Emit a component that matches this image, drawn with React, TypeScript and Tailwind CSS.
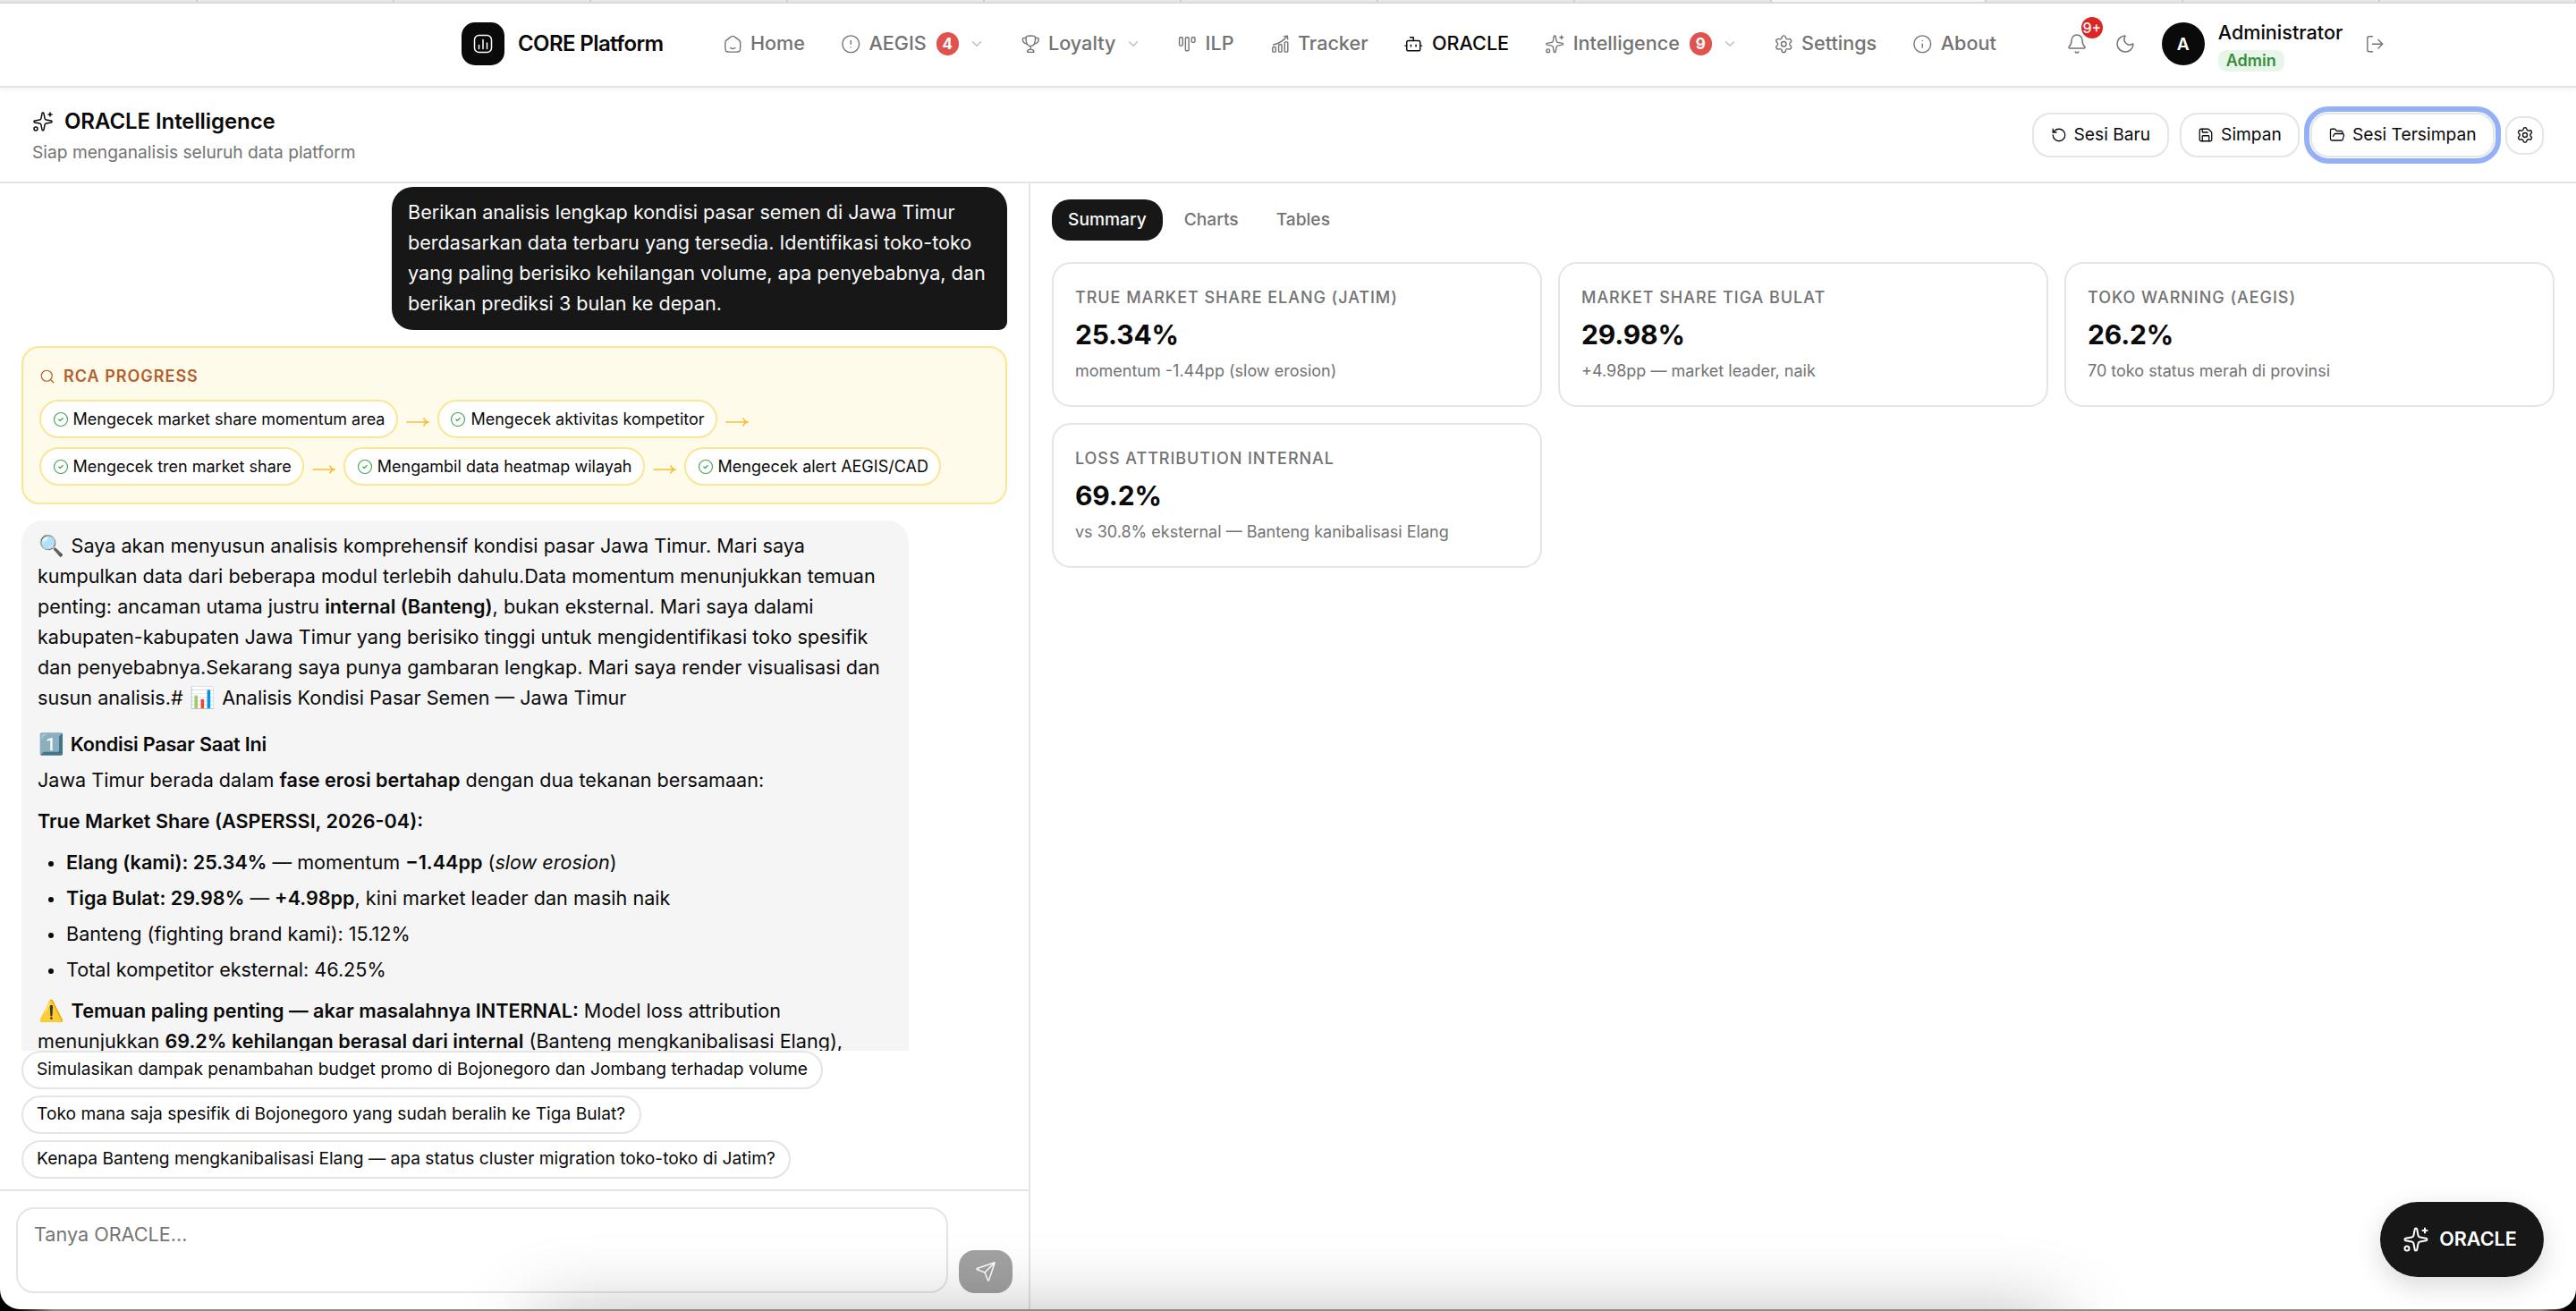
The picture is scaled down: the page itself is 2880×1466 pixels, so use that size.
import React from 'react';
import {
  Bell,
  Bot,
  ChevronDown,
  CircleAlert,
  CircleCheck,
  FolderOpen,
  Info,
  LogOut,
  Moon,
  RotateCcw,
  Save,
  Search,
  Send,
  Settings,
  Sparkles,
} from 'lucide-react';

const HomeIcon = () => (
  <svg width="22.5" height="22.5" viewBox="0 0 24 24" fill="none" stroke="currentColor" strokeWidth="1.5" strokeLinecap="round" strokeLinejoin="round">
    <path d="M3 12v2.5c0 3.3 0 4.95 1.03 5.97C5.05 21.5 6.7 21.5 10 21.5h4c3.3 0 4.95 0 5.97-1.03C21 19.45 21 17.8 21 14.5V12c0-1.7 0-2.53-.36-3.26-.35-.73-1.02-1.24-2.34-2.28l-2-1.55C14.23 3.3 13.2 2.5 12 2.5s-2.23.8-4.3 2.41l-2 1.55C4.37 7.5 3.7 8.01 3.36 8.74 3 9.47 3 10.3 3 12z" />
    <path d="M15 16.6c-.8.62-1.85 1-3 1s-2.2-.38-3-1" />
  </svg>
);

const TrophyIcon = () => (
  <svg width="22.5" height="22.5" viewBox="0 0 24 24" fill="none" stroke="currentColor" strokeWidth="1.5" strokeLinecap="round" strokeLinejoin="round">
    <path d="M6.3 4.3C6.3 2.9 7.6 2.2 12 2.2s5.7.7 5.7 2.1c0 5.3-1.7 10.2-5.7 10.2S6.3 9.6 6.3 4.3z" />
    <path d="M6.4 4.8H4.2c-1.3 0-2 .8-1.8 2 .5 2.5 1.9 4.4 4.4 5M17.6 4.8h2.2c1.3 0 2 .8 1.8 2-.5 2.5-1.9 4.4-4.4 5" />
    <path d="M12 14.6v3.6M8.9 21.7c-.7 0-1-.4-.8-1 .5-1.5 2-2.4 3.9-2.4s3.400.9 3.9 2.4c.2.6-.1 1-.8 1z" />
  </svg>
);

const KanbanIcon = () => (
  <svg width="22.5" height="22.5" viewBox="0 0 24 24" fill="none" stroke="currentColor" strokeWidth="1.5">
    <rect x="2.7" y="4" width="4" height="10" rx="1.2" />
    <rect x="10" y="4" width="4" height="16" rx="1.2" />
    <rect x="17.3" y="4" width="4" height="6" rx="1.2" />
  </svg>
);

const TrackerIcon = () => (
  <svg width="22.5" height="22.5" viewBox="0 0 24 24" fill="none" stroke="currentColor" strokeWidth="1.5" strokeLinecap="round" strokeLinejoin="round">
    <rect x="3" y="15.5" width="3.7" height="6" rx="1" />
    <rect x="10.2" y="12.5" width="3.7" height="9" rx="1" />
    <rect x="17.4" y="9.5" width="3.7" height="12" rx="1" />
    <path d="M4 12.8c6-1.2 11.5-4.4 16-9.8M16.5 2.8l4-.5.6 4" />
  </svg>
);

const LogoIcon = () => (
  <svg width="24" height="24" viewBox="0 0 24 24" fill="none" stroke="currentColor" strokeWidth="1.5" strokeLinecap="round">
    <rect x="2.5" y="2.5" width="19" height="19" rx="5" />
    <path d="M7.5 13.5v4M12 7.5v10M16.5 11v6.5" />
  </svg>
);

const StepArrow = () => (
  <svg width="26" height="12" viewBox="0 0 26 12" fill="none" stroke="#f9bd35" strokeWidth="1.6" className="mt-1.5 self-center">
    <path d="M.5 6h24M19.5 1.5c1 2.3 2.7 3.8 5 4.500-2.300.7-4 2.200-5 4.500" />
  </svg>
);

const stroke = { size: 22.5, strokeWidth: 1.5 };

type NavEntry = {
  label: string;
  icon: React.ReactNode;
  badge?: number;
  menu?: boolean;
  active?: boolean;
};

const navItems: NavEntry[] = [
  { label: 'Home', icon: <HomeIcon /> },
  { label: 'AEGIS', icon: <CircleAlert {...stroke} />, badge: 4, menu: true },
  { label: 'Loyalty', icon: <TrophyIcon />, menu: true },
  { label: 'ILP', icon: <KanbanIcon /> },
  { label: 'Tracker', icon: <TrackerIcon /> },
  { label: 'ORACLE', icon: <Bot {...stroke} />, active: true },
  { label: 'Intelligence', icon: <Sparkles {...stroke} />, badge: 9, menu: true },
  { label: 'Settings', icon: <Settings {...stroke} /> },
  { label: 'About', icon: <Info {...stroke} /> },
];

const rcaSteps = [
  'Mengecek market share momentum area',
  'Mengecek aktivitas kompetitor',
  'Mengecek tren market share',
  'Mengambil data heatmap wilayah',
  'Mengecek alert AEGIS/CAD',
];

const suggestions = [
  'Simulasikan dampak penambahan budget promo di Bojonegoro dan Jombang terhadap volume',
  'Toko mana saja spesifik di Bojonegoro yang sudah beralih ke Tiga Bulat?',
  'Kenapa Banteng mengkanibalisasi Elang — apa status cluster migration toko-toko di Jatim?',
];

const cards = [
  { label: 'TRUE MARKET SHARE ELANG (JATIM)', value: '25.34%', note: 'momentum -1.44pp (slow erosion)' },
  { label: 'MARKET SHARE TIGA BULAT', value: '29.98%', note: '+4.98pp — market leader, naik' },
  { label: 'TOKO WARNING (AEGIS)', value: '26.2%', note: '70 toko status merah di provinsi' },
  { label: 'LOSS ATTRIBUTION INTERNAL', value: '69.2%', note: 'vs 30.8% eksternal — Banteng kanibalisasi Elang' },
];

const Emoji = ({ children }: { children: React.ReactNode }) => (
  <span className="inline-block w-[31.5px] pl-px text-[23px] leading-none">{children}</span>
);

const Bullet = ({ children }: { children: React.ReactNode }) => (
  <li className="relative before:absolute before:top-[16px] before:-left-[20px] before:size-1.5 before:rounded-full before:bg-[#0a0a0a]">
    {children}
  </li>
);

const TabStrip = () => (
  <div className="flex h-0.5 shrink-0 overflow-hidden bg-[#e8e8e8] pl-px">
    {Array.from({ length: 13 }, (_, i) => (
      <span
        key={i}
        className={`h-full shrink-0 border-r-2 border-[#d0d0d0] ${i === 9 ? 'w-[240px] bg-[#f8f8f8]' : 'w-[220px]'}`}
      />
    ))}
  </div>
);

const TopNav = () => (
  <header className="relative z-10 flex h-24 shrink-0 items-center border-y-2 border-t-[#dadada] border-b-[#e4e4e4] bg-white pb-0.5 pl-[516px] shadow-[0_2px_4px_rgba(0,0,0,0.05)]">
    <div className="flex w-[291.5px] items-center gap-[15px]">
      <div className="flex size-12 items-center justify-center rounded-[15px] bg-[#0a0a0a] text-white">
        <LogoIcon />
      </div>
      <span className="text-2xl font-semibold tracking-[-0.025em] text-[#0a0a0a]">CORE Platform</span>
    </div>

    <nav className="flex items-center gap-10 text-[21.6px] font-medium text-[#737373]">
      {navItems.map((item) => (
        <a key={item.label} className={`flex items-center gap-[9px] ${item.active ? 'text-[#0a0a0a]' : ''}`}>
          {item.icon}
          <span className="pb-0.5 leading-8 whitespace-nowrap">{item.label}</span>
          {item.badge && (
            <span className="ml-0.5 flex h-[26px] min-w-[25px] items-center justify-center rounded-full bg-[#e0524d] text-[17px] leading-none font-bold text-white">
              {item.badge}
            </span>
          )}
          {item.menu && <ChevronDown size={18} strokeWidth={1.5} className="ml-[1.7px] opacity-50" />}
        </a>
      ))}
    </nav>

    <div className="flex items-center pl-[78px] text-[#737373]">
      <button className="relative">
        <Bell size={24} strokeWidth={1.5} />
        <span className="absolute -top-[18px] left-[17px] flex size-6 items-center justify-center rounded-full bg-[#dc2626] text-[16px] leading-none font-medium text-white">
          9+
        </span>
      </button>
      <Moon size={24} strokeWidth={1.5} className="ml-[30px]" />
      <div className="ml-[29px] flex size-12 items-center justify-center rounded-full bg-[#0a0a0a] text-[19.2px] font-semibold text-white">
        A
      </div>
      <div className="ml-[15px] flex flex-col items-start pt-[3px]">
        <span className="text-[21.6px] leading-[30px] font-medium text-[#0a0a0a]">Administrator</span>
        <span className="mt-[5px] h-6 rounded-[9px] bg-[#e8f5e9] px-[9px] text-[18px] leading-6 font-semibold text-[#388e3c]">Admin</span>
      </div>
      <LogOut size={22.5} strokeWidth={1.5} className="ml-[25px]" />
    </div>
  </header>
);

const actionBtn =
  'flex h-[50px] items-center gap-[8px] rounded-[20px] border-2 border-[#e5e5e5] bg-white px-[18.5px] text-[19.2px] text-[#0a0a0a]';

const PageHeader = () => (
  <div className="flex h-[107px] shrink-0 items-center justify-between border-b-2 border-[#e5e5e5] px-9">
    <div className="pt-0.5">
      <h1 className="flex items-center gap-3 text-2xl leading-9 font-semibold tracking-[-0.003em] text-[#0a0a0a]">
        <Sparkles size={24} strokeWidth={1.5} />
        ORACLE Intelligence
      </h1>
      <p className="mt-0.5 text-[19.2px] leading-[29px] text-[#737373]">Siap menganalisis seluruh data platform</p>
    </div>
    <div className="flex items-center gap-3 pt-px">
      <button className={actionBtn}>
        <RotateCcw size={18} strokeWidth={1.7} />
        <span className="pb-0.5">Sesi Baru</span>
      </button>
      <button className={actionBtn}>
        <Save size={18} strokeWidth={1.7} />
        <span className="pb-0.5">Simpan</span>
      </button>
      <button className={`${actionBtn} outline-[6px] outline-offset-1 outline-[#94b0f6]`}>
        <FolderOpen size={18} strokeWidth={1.7} />
        <span className="pb-0.5">Sesi Tersimpan</span>
      </button>
      <button className="flex size-[43px] items-center justify-center rounded-[18px] border-2 border-[#e5e5e5] bg-white text-[#171717]">
        <Settings size={20} strokeWidth={1.7} />
      </button>
    </div>
  </div>
);

const RcaProgress = () => (
  <div className="rounded-[20px] border-2 border-[#fae694] bg-[#fffbeb] px-[18px] pt-[18px] pb-[19px]">
    <div className="flex items-center gap-[9px] text-lg leading-[27px] font-semibold tracking-[0.055em] text-[#b45f2c]">
      <Search size={18} strokeWidth={1.6} />
      RCA PROGRESS
    </div>
    <div className="mt-[13px] flex flex-wrap gap-x-[9px] gap-y-[10px]">
      {rcaSteps.map((step, i) => (
        <React.Fragment key={step}>
          <span className="flex h-[43px] items-center gap-[5px] rounded-full border-2 border-[#fae694] bg-white px-[12.5px] text-lg text-[#0a0a0a]">
            <CircleCheck size={18} strokeWidth={1.5} className="text-[#43a457]" />
            {step}
          </span>
          {i < rcaSteps.length - 1 && <StepArrow />}
        </React.Fragment>
      ))}
    </div>
  </div>
);

const AssistantMessage = () => (
  <div className="w-[992px] rounded-t-3xl bg-[#f5f5f5] px-[18px] pt-[11px] text-[21.6px] leading-[34px] text-[#0a0a0a]">
    <p>
      <Emoji>🔍</Emoji> Saya akan menyusun analisis komprehensif kondisi pasar Jawa Timur. Mari saya kumpulkan data dari
      beberapa modul terlebih dahulu.Data momentum menunjukkan temuan penting: ancaman utama justru{' '}
      <strong className="font-semibold">internal (Banteng)</strong>, bukan eksternal. Mari saya dalami kabupaten-kabupaten
      Jawa Timur yang berisiko tinggi untuk mengidentifikasi toko spesifik dan penyebabnya.Sekarang saya punya gambaran
      lengkap. Mari saya render visualisasi dan susun analisis.# <Emoji>📊</Emoji> Analisis Kondisi Pasar Semen — Jawa Timur
    </p>
    <h3 className="mt-[18px] font-semibold tracking-[-0.01em]">
      <Emoji>1️⃣</Emoji> Kondisi Pasar Saat Ini
    </h3>
    <p className="mt-1.5">
      Jawa Timur berada dalam <strong className="font-semibold">fase erosi bertahap</strong> dengan dua tekanan bersamaan:
    </p>
    <p className="mt-3 font-semibold">True Market Share (ASPERSSI, 2026-04):</p>
    <ul className="mt-3 flex flex-col gap-1.5 pl-8">
      <Bullet>
        <strong className="font-semibold">Elang (kami): 25.34%</strong> — momentum{' '}
        <strong className="font-semibold">−1.44pp</strong> (<em>slow erosion</em>)
      </Bullet>
      <Bullet>
        <strong className="font-semibold">Tiga Bulat: 29.98%</strong> — <strong className="font-semibold">+4.98pp</strong>,
        kini market leader dan masih naik
      </Bullet>
      <Bullet>Banteng (fighting brand kami): 15.12%</Bullet>
      <Bullet>Total kompetitor eksternal: 46.25%</Bullet>
    </ul>
    <p className="mt-3">
      <Emoji>⚠️</Emoji> <strong className="font-semibold">Temuan paling penting — akar masalahnya INTERNAL:</strong> Model
      loss attribution menunjukkan <strong className="font-semibold">69.2% kehilangan berasal dari internal</strong> (Banteng
      mengkanibalisasi Elang),
    </p>
  </div>
);

const ChatPanel = () => (
  <section className="flex w-[1152px] shrink-0 flex-col border-r-2 border-[#e5e5e5]">
    <div className="flex h-[970px] shrink-0 flex-col gap-[18px] overflow-hidden px-6 pt-1">
      <div className="w-[688px] shrink-0 self-end rounded-3xl rounded-br-[9px] bg-[#171717] px-[18px] pt-[11px] pb-[13px] text-[21.6px] leading-[34px] text-[#fafafa]">
        Berikan analisis lengkap kondisi pasar semen di Jawa Timur berdasarkan data terbaru yang tersedia. Identifikasi
        toko-toko yang paling berisiko kehilangan volume, apa penyebabnya, dan berikan prediksi 3 bulan ke depan.
      </div>
      <RcaProgress />
      <AssistantMessage />
    </div>

    <div className="flex flex-col items-start gap-[7px] px-6 pb-3">
      {suggestions.map((s) => (
        <button
          key={s}
          className="h-[43px] rounded-full border-2 border-[#e5e5e5] bg-white pr-[15.5px] pb-0.5 pl-[15px] text-[19.2px] whitespace-nowrap text-[#0a0a0a]"
        >
          {s}
        </button>
      ))}
    </div>

    <div className="flex grow items-end gap-3 border-t-2 border-[#e5e5e5] pb-[18px] pl-[18px]">
      <textarea
        placeholder="Tanya ORACLE..."
        className="h-24 w-[1042px] resize-none rounded-[20px] border-2 border-[#e5e5e5] bg-white px-[18px] py-[11px] text-[21.6px] leading-[34px] placeholder:text-[#757575]"
      />
      <button className="flex h-12 w-[60px] items-center justify-center rounded-[18px] bg-[#a2a2a2] text-white">
        <Send size={24} strokeWidth={1.5} />
      </button>
    </div>
  </section>
);

const ResultPanel = () => (
  <section className="grow px-6 pt-[18px]">
    <div className="flex gap-1.5 text-[19.2px] font-medium text-[#737373]">
      <button className="h-[46px] rounded-[20px] bg-[#171717] px-[18px] pb-0.5 text-[#fafafa]">Summary</button>
      <button className="h-[46px] px-[18px] pb-0.5">Charts</button>
      <button className="h-[46px] px-[18px] pb-0.5">Tables</button>
    </div>
    <div className="mt-6 grid grid-cols-3 gap-[18px]">
      {cards.map((c) => (
        <div key={c.label} className="h-[162px] rounded-[21px] border-2 border-[#e5e5e5] bg-white p-6">
          <p className="text-lg leading-[27px] font-medium tracking-[0.95px] text-[#737373]">{c.label}</p>
          <p className="mt-1.5 text-3xl leading-[45px] font-bold tracking-[-0.15px] text-[#0a0a0a]">{c.value}</p>
          <p className="mt-1 text-lg leading-[27px] text-[#737373]">{c.note}</p>
        </div>
      ))}
    </div>
  </section>
);

export default function App() {
  return (
    <div className="relative h-[1466px] w-[2880px] overflow-hidden bg-[linear-gradient(90deg,#000_0,#000_20px,#8c8c88_60px,#8c8c88_2840px,#000_2868px)] font-[Inter,sans-serif]">
      <div className="relative flex h-[1464px] flex-col overflow-hidden rounded-b-[22px] bg-white">
        <TabStrip />
        <TopNav />
        <PageHeader />
        <main className="flex min-h-0 grow">
          <ChatPanel />
          <ResultPanel />
        </main>

        <button className="absolute right-9 bottom-9 flex h-[84px] w-[183px] items-center justify-center gap-[11px] rounded-full bg-[#171717] pr-[5px] pb-px text-[21.6px] font-semibold text-white shadow-[0_10px_30px_rgba(0,0,0,0.15)]">
          <Sparkles size={30} strokeWidth={1.6} />
          ORACLE
        </button>

        {/* soft shadow rising from the dock */}
        <div className="pointer-events-none absolute top-[1474px] left-[600px] h-24 w-[1700px] shadow-[0_0_90px_rgba(0,0,0,0.3)]" />
      </div>
    </div>
  );
}
